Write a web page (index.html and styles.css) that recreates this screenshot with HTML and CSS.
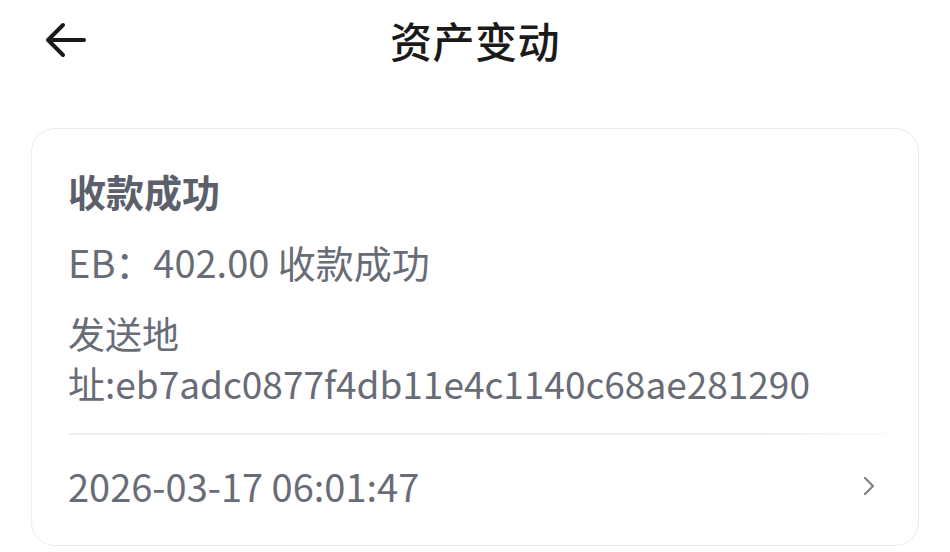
FILE: index.html
```html
<!DOCTYPE html>
<html lang="zh-CN">
<head>
<meta charset="utf-8">
<link rel="stylesheet" href="styles.css">
</head>
<body>
<header class="topbar">
  <span class="back">
    <svg width="42" height="36" viewBox="0 0 42 36" fill="none" stroke="#1a1a1a" stroke-width="4" stroke-linecap="round" stroke-linejoin="round">
      <path d="M39 18H4M18 3L3 18l15 15"/>
    </svg>
  </span>
  <h1 class="title">资产变动</h1>
</header>
<main class="card">
  <div class="card-title">收款成功</div>
  <div class="line amount">EB：402.00 收款成功</div>
  <div class="line addr">发送地址:eb7adc0877f4db11e4c1140c68ae281290</div>
  <div class="divider"></div>
  <div class="row">
    <span class="date">2026-03-17 06:01:47</span>
    <svg class="chev" width="14" height="22" viewBox="0 0 14 22" fill="none" stroke="#7d8088" stroke-width="2.2" stroke-linecap="round" stroke-linejoin="round">
      <path d="M3 3l8 8-8 8"/>
    </svg>
  </div>
</main>
</body>
</html>
```
FILE: styles.css
```css
html, body {
  margin: 0;
  padding: 0;
  background: #ffffff;
}
body {
  font-family: "Noto Sans CJK SC", "Noto Sans", sans-serif;
  width: 950px;
  height: 552px;
  overflow: hidden;
}
.topbar {
  position: relative;
  height: 80px;
  display: flex;
  align-items: center;
  justify-content: center;
}
.back {
  position: absolute;
  left: 45px;
  top: 22px;
  display: flex;
}
.title {
  margin: 0;
  font-size: 42px;
  font-weight: 500;
  line-height: 52px;
  color: #1a1a1a;
  letter-spacing: 0.5px;
}
.card {
  margin: 48px 31px 0 31px;
  border: 1.5px solid #ececec;
  border-radius: 24px;
  padding: 37px 33px 34px 36px;
  color: #686c76;
}
.card-title {
  font-size: 38px;
  font-weight: 700;
  line-height: 50px;
  color: #5b606b;
  margin-bottom: 21px;
}
.line {
  font-size: 38px;
  line-height: 50px;
}
.amount {
  margin-bottom: 21px;
}
.addr {
  font-size: 37px;
  margin-bottom: 25px;
}
.divider {
  height: 2px;
  background: linear-gradient(to right, #efefef 85%, #fafafa);
}
.row {
  display: flex;
  align-items: center;
  justify-content: space-between;
  padding-top: 26px;
}
.date {
  font-size: 38px;
  line-height: 50px;
}
.chev {
  margin-right: 9px;
}
```
